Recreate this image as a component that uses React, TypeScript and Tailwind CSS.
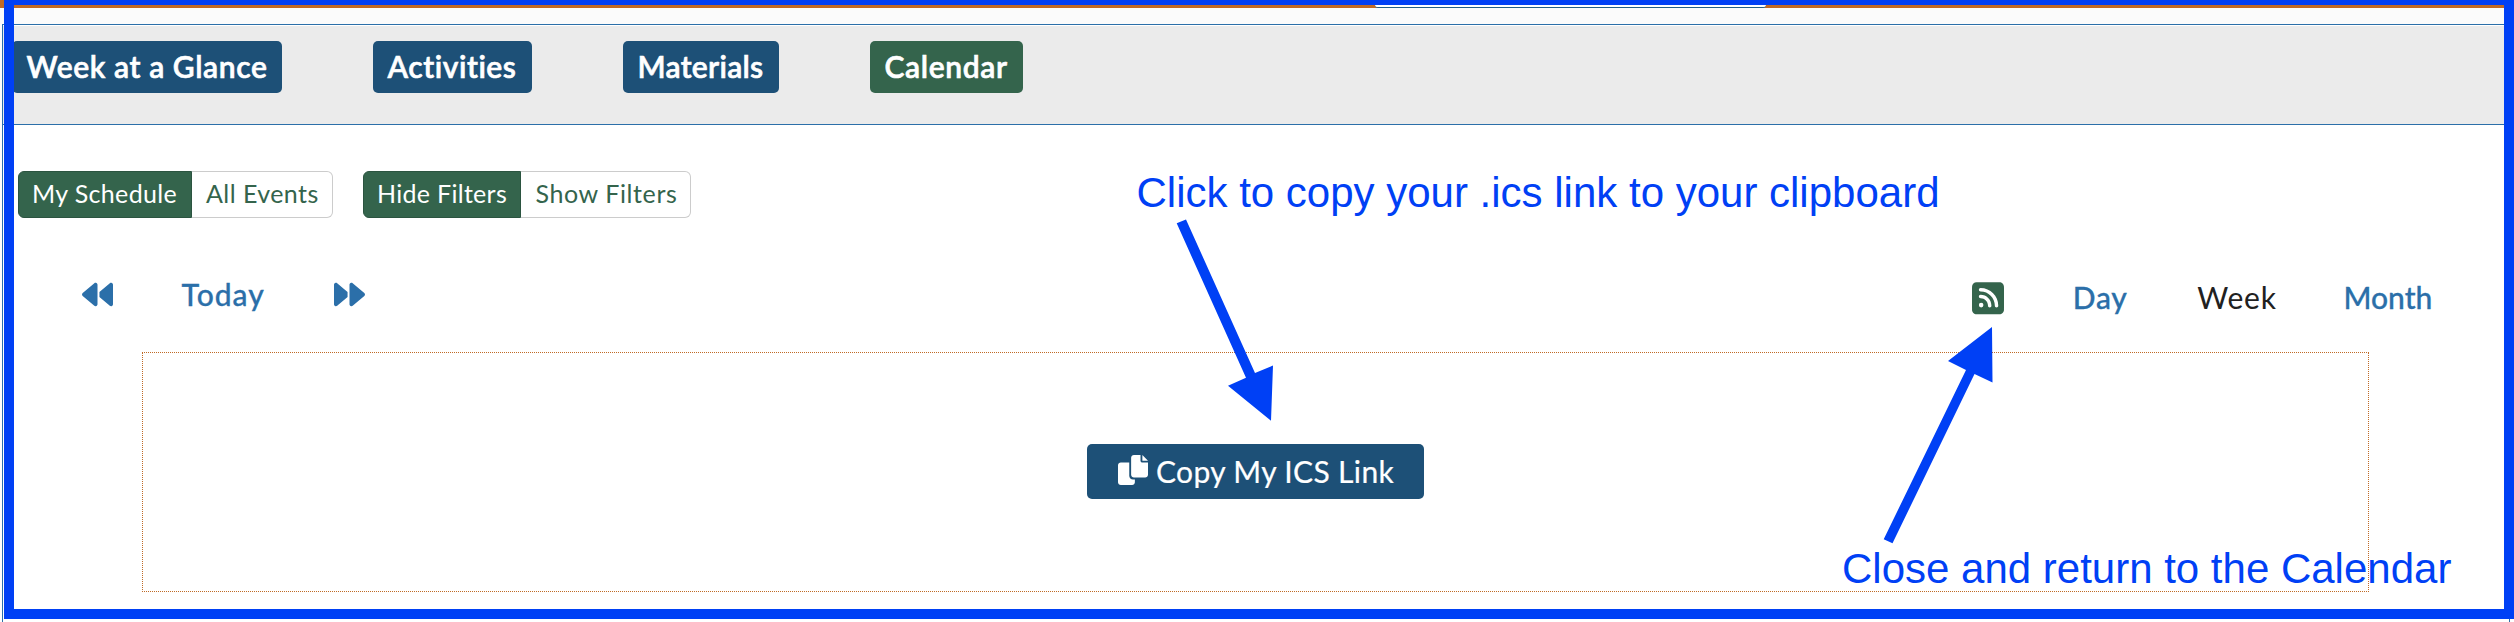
import type { ReactNode } from "react";
import { FaBackward, FaForward, FaSquareRss } from "react-icons/fa6";

function NavButton({ className, children }: { className: string; children: ReactNode }) {
  return (
    <button
      className={`flex h-[52px] shrink-0 items-center rounded-[5px] pb-[2px] pl-[14.5px] text-[30px] leading-9 font-semibold whitespace-nowrap text-white [-webkit-text-stroke:0.6px_currentColor] ${className}`}
    >
      {children}
    </button>
  );
}

function Segment({ active, className, children }: { active?: boolean; className: string; children: ReactNode }) {
  const tone = active
    ? "rounded-l-[6px] border border-[#2b5440] bg-[#34644c] text-white"
    : "rounded-r-[6px] border border-l-0 border-[#cccccc] bg-white text-[#34644c]";
  return (
    <button
      className={`flex h-[47px] shrink-0 items-center pb-[3px] text-[25px] leading-[30px] whitespace-nowrap ${tone} ${className}`}
    >
      {children}
    </button>
  );
}

function CopyIcon() {
  return (
    <svg viewBox="0 0 512 512" className="mt-[-3px] size-[30px] shrink-0 fill-white">
      <path d="M384 96L384 0h-112c-26.51 0-48 21.49-48 48v288c0 26.51 21.49 48 48 48H464c26.51 0 48-21.49 48-48V128h-95.1C398.4 128 384 113.6 384 96zM416 0v96h96L416 0zM192 352V128h-144c-26.51 0-48 21.49-48 48v288c0 26.51 21.49 48 48 48h192c26.51 0 48-21.49 48-48L288 416h-32C220.7 416 192 387.3 192 352z" />
    </svg>
  );
}

function Annotations() {
  return (
    <div className="pointer-events-none absolute inset-0 font-['Liberation_Sans',sans-serif] text-[42px] leading-[48px] whitespace-nowrap text-[#0040f5]">
      <div className="absolute top-0 right-0 bottom-[3px] left-1 border-t-[5px] border-r-[10px] border-b-[10px] border-l-[10px] border-[#0040f5]" />
      <svg viewBox="0 0 2514 622" className="absolute inset-0 h-full w-full fill-[#0040f5]">
        <polygon points="1176.7,223.3 1186,219.5 1255,373 1273,365.5 1271,420.8 1228,385.7 1246,377.7" />
        <polygon points="1883.7,539.3 1892.5,543.3 1974.5,374 1992.5,382.5 1992,327 1948,361 1966,370" />
      </svg>
      <p className="absolute top-[169px] left-[1136.5px]">Click to copy your .ics link to your clipboard</p>
      <p className="absolute top-[544.5px] left-[1842px]">Close and return to the Calendar</p>
    </div>
  );
}

export default function App() {
  return (
    <div className="relative h-[622px] w-full overflow-hidden bg-white font-['Lato',sans-serif]">
      <div className="flex h-2 bg-[#c06a26] pl-[1375px]">
        <div className="h-2 w-[391px] rounded-b-[3px] border-b border-[#235f86] bg-white" />
      </div>
      <div className="h-4 bg-[#fbfbfb]" />

      <div className="ml-0.5 h-[620px] w-[2508px] border border-[#2b6fa9] pt-px">
        <nav className="flex h-[99px] gap-[91px] border-b border-[#2b6fa9] bg-[#ebebeb] pt-[15px] pl-[9px]">
          <NavButton className="w-[270px] bg-[#1d5077] tracking-[0.6px]">Week at a Glance</NavButton>
          <NavButton className="w-[159px] bg-[#1d5077] tracking-[0.55px]">Activities</NavButton>
          <NavButton className="w-[156px] bg-[#1d5077] tracking-[0.3px]">Materials</NavButton>
          <NavButton className="w-[153px] bg-[#34644c] tracking-[0.65px]">Calendar</NavButton>
        </nav>

        <div className="mt-[46px] flex gap-[30px] pl-[15px]">
          <div className="flex">
            <Segment active className="w-[174px] pl-[13px] tracking-[0.35px]">My Schedule</Segment>
            <Segment className="w-[141px] pl-[14px] tracking-[0.45px]">All Events</Segment>
          </div>
          <div className="flex">
            <Segment active className="w-[158px] pl-[13px] tracking-[0.3px]">Hide Filters</Segment>
            <Segment className="w-[170px] pl-[14.5px] tracking-[0.6px]">Show Filters</Segment>
          </div>
        </div>

        <div className="flex h-[134px] justify-between pr-[75.5px] pl-[79px] text-[30px] leading-9 font-medium whitespace-nowrap text-[#2b6fa9]">
          <div className="flex items-start gap-[68px] pt-[57px]">
            <FaBackward className="mt-[3.5px] size-[31px]" />
            <span className="mt-px w-[84.6px] pl-[0.5px] tracking-[1px] [-webkit-text-stroke:0.3px_currentColor]">Today</span>
            <FaForward className="mt-[3.5px] size-[31px]" />
          </div>
          <div className="flex items-start pt-[60px]">
            <FaSquareRss className="mt-[1.7px] mr-[68.3px] h-[36.5px] w-8 text-[#34644c]" />
            <span className="mt-px mr-[69px] w-14 pl-[0.5px] tracking-[0.7px] [-webkit-text-stroke:0.3px_currentColor]">Day</span>
            <span className="mt-px mr-[68.2px] w-[78px] font-normal tracking-[0.8px] text-[#212121]">Week</span>
            <span className="mt-px w-[90px] [-webkit-text-stroke:0.3px_currentColor]">Month</span>
          </div>
        </div>

        <div className="ml-[139px] flex h-[240px] w-[2227px] items-start justify-center border border-dotted border-[#c06a26]">
          <button className="mt-[91px] flex h-[55px] w-[337px] items-center gap-[8px] rounded-[5px] bg-[#1d5077] pb-px pl-[31px] text-[30px] leading-9 tracking-[0.35px] whitespace-nowrap text-white [-webkit-text-stroke:0.2px_currentColor]">
            <CopyIcon />
            Copy My ICS Link
          </button>
        </div>
      </div>

      <Annotations />
    </div>
  );
}
